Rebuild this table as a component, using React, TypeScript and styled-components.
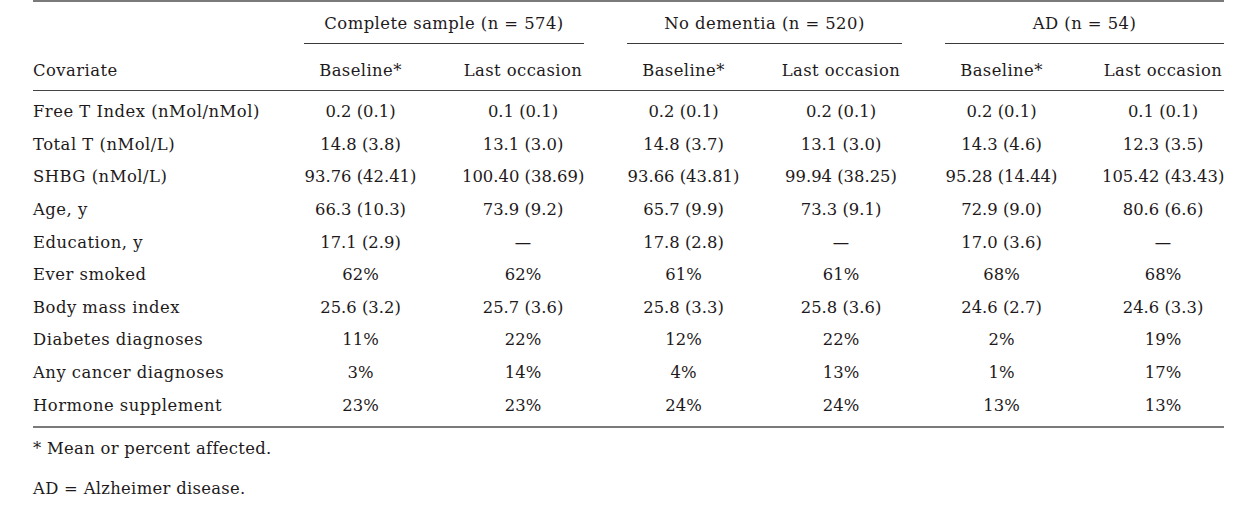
import React from "react";
import styled, { createGlobalStyle } from "styled-components";

const GlobalStyle = createGlobalStyle`
  html, body {
    margin: 0;
    padding: 0;
    background: #ffffff;
  }
  body {
    font-family: "DejaVu Serif", "Liberation Serif", serif;
    color: #1e1a1b;
  }
`;

const GROUP_WIDTHS = [280, 275, 279];

const Page = styled.div`
  padding: 0 23px 0 33px;
  width: 1191px;
  font-family: "DejaVu Serif", "Liberation Serif", serif;
  font-size: 16.4px;
  color: #1e1a1b;
`;

const Table = styled.div`
  border-top: 2px solid #7a7a7a;
  border-bottom: 2px solid #7a7a7a;
`;

const Row = styled.div`
  display: grid;
  grid-template-columns: 228px ${GROUP_WIDTHS.map((w) => `${w}px`).join(" ")};
  column-gap: 43px;
`;

const Head = styled.div`
  border-bottom: 1px solid #444;
`;

const Body = styled.div`
  padding: 5.3px 0 3.7px;
`;

const BodyRow = styled(Row)`
  height: 32.6px;
  line-height: 32.6px;
`;

const GroupTitle = styled.div<{ $empty?: boolean }>`
  text-align: center;
  line-height: 20px;
  padding: 12px 0 9px;
  letter-spacing: 0.45px;
  border-bottom: ${(p) => (p.$empty ? "none" : "1px solid #3a3a3a")};
  white-space: nowrap;
`;

const SubHeadLabel = styled.div`
  line-height: 20px;
  padding: 17px 0 9px;
  letter-spacing: 0.45px;
  white-space: nowrap;
`;

const Pair = styled.div`
  display: grid;
  grid-template-columns: 113px 122px;
  justify-content: space-between;
`;

const SubHeadCell = styled.div`
  text-align: center;
  line-height: 20px;
  padding: 17px 0 9px;
  letter-spacing: 0.42px;
  white-space: nowrap;
`;

const Label = styled.div`
  letter-spacing: 0.5px;
  white-space: nowrap;
`;

const Cell = styled.div`
  text-align: center;
  white-space: nowrap;
`;

const Notes = styled.div`
  padding-top: 11px;
`;

const Note = styled.p`
  margin: 0 0 20px;
  line-height: 20px;
  letter-spacing: 0.3px;
`;

const groups = [
  "Complete sample (n = 574)",
  "No dementia (n = 520)",
  "AD (n = 54)",
];

const rows: string[][] = [
  ["Free T Index (nMol/nMol)", "0.2 (0.1)", "0.1 (0.1)", "0.2 (0.1)", "0.2 (0.1)", "0.2 (0.1)", "0.1 (0.1)"],
  ["Total T (nMol/L)", "14.8 (3.8)", "13.1 (3.0)", "14.8 (3.7)", "13.1 (3.0)", "14.3 (4.6)", "12.3 (3.5)"],
  ["SHBG (nMol/L)", "93.76 (42.41)", "100.40 (38.69)", "93.66 (43.81)", "99.94 (38.25)", "95.28 (14.44)", "105.42 (43.43)"],
  ["Age, y", "66.3 (10.3)", "73.9 (9.2)", "65.7 (9.9)", "73.3 (9.1)", "72.9 (9.0)", "80.6 (6.6)"],
  ["Education, y", "17.1 (2.9)", "\u2014", "17.8 (2.8)", "\u2014", "17.0 (3.6)", "\u2014"],
  ["Ever smoked", "62%", "62%", "61%", "61%", "68%", "68%"],
  ["Body mass index", "25.6 (3.2)", "25.7 (3.6)", "25.8 (3.3)", "25.8 (3.6)", "24.6 (2.7)", "24.6 (3.3)"],
  ["Diabetes diagnoses", "11%", "22%", "12%", "22%", "2%", "19%"],
  ["Any cancer diagnoses", "3%", "14%", "4%", "13%", "1%", "17%"],
  ["Hormone supplement", "23%", "23%", "24%", "24%", "13%", "13%"],
];

export default function App() {
  return (
    <>
      <GlobalStyle />
      <Page>
        <Table>
          <Head>
            <Row>
              <GroupTitle $empty />
              {groups.map((g) => (
                <GroupTitle key={g}>{g}</GroupTitle>
              ))}
            </Row>
            <Row>
              <SubHeadLabel>Covariate</SubHeadLabel>
              {groups.map((g) => (
                <Pair key={g}>
                  <SubHeadCell>Baseline*</SubHeadCell>
                  <SubHeadCell>Last occasion</SubHeadCell>
                </Pair>
              ))}
            </Row>
          </Head>
          <Body>
            {rows.map((r) => (
              <BodyRow key={r[0]}>
                <Label>{r[0]}</Label>
                {[0, 1, 2].map((gi) => (
                  <Pair key={gi}>
                    <Cell>{r[1 + gi * 2]}</Cell>
                    <Cell>{r[2 + gi * 2]}</Cell>
                  </Pair>
                ))}
              </BodyRow>
            ))}
          </Body>
        </Table>
        <Notes>
          <Note>* Mean or percent affected.</Note>
          <Note>AD = Alzheimer disease.</Note>
        </Notes>
      </Page>
    </>
  );
}
